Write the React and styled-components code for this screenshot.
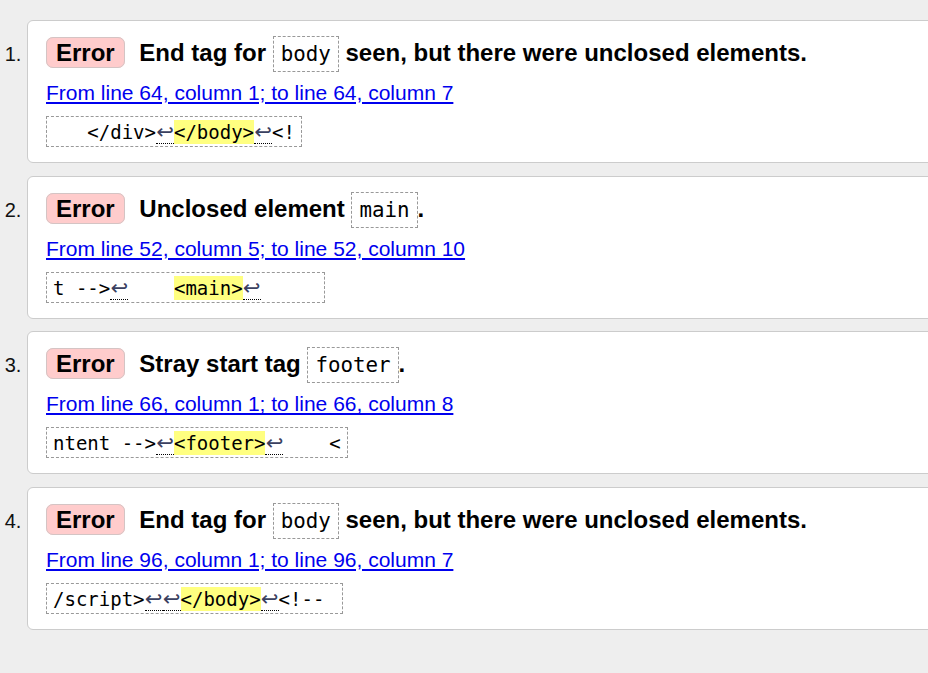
import React from "react";
import styled, { createGlobalStyle } from "styled-components";

const Global = createGlobalStyle`
  html, body { margin: 0; padding: 0; background: #eeeeee; overflow: hidden; }
  body { font-family: "Liberation Sans", Arial, sans-serif; color: #000; }
`;

const List = styled.ol`
  margin: 0;
  padding: 20px 0 0 27px;
  list-style: decimal outside;
`;

const Item = styled.li`
  font-size: 20px;
  background: #fff;
  border: 1px solid #cccccc;
  border-radius: 6px;
  margin: 0 -40px 12.67px 0;
  padding: 18px 18px 15px;
  &::marker { color: #111; font-size: 20px; }
`;

const Heading = styled.p`
  margin: 0;
  font-size: 24px;
  line-height: 28px;
  font-weight: bold;
  white-space: nowrap;
`;

const Badge = styled.strong`
  background: #ffcccc;
  border: 1px solid #d4c4c4;
  border-radius: 7px;
  padding: 1px 9px;
  margin-right: 8px;
`;

const Code = styled.code`
  font-family: "DejaVu Sans Mono", monospace;
  font-weight: normal;
  font-size: 20.8px;
  line-height: 1;
  border: 1px dashed #999;
  padding: 5px 7px;
`;

const Location = styled.p`
  margin: 14px 0 0;
  font-size: 21px;
  line-height: 24px;
  a { color: #0000ee; text-decoration: underline; }
`;

const Extract = styled.code`
  display: block;
  width: fit-content;
  margin-top: 11px;
  font-family: "DejaVu Sans Mono", monospace;
  font-size: 19px;
  line-height: 24px;
  white-space: pre;
  border: 1px dashed #999;
  padding: 3px 6px 2px;
`;

const Mark = styled.mark`
  display: inline-block;
  height: 24px;
  background: #ffff80;
  color: #000;
`;

const Newline = styled.span`
  display: inline-block;
  box-sizing: border-box;
  width: 18px;
  height: 24px;
  line-height: 24px;
  text-align: center;
  font-family: "DejaVu Sans", sans-serif;
  font-size: 21px;
  color: #3a4060;
  border-bottom: 1px dotted #000;
  vertical-align: top;
  overflow: hidden;
`;

const NL = { nl: true };
const hl = (t) => ({ hl: t });

const messages = [
  {
    pre: "End tag for ",
    code: "body",
    post: " seen, but there were unclosed elements.",
    loc: "From line 64, column 1; to line 64, column 7",
    extract: ["   </div>", NL, hl("</body>"), NL, "<!"],
  },
  {
    pre: "Unclosed element ",
    code: "main",
    post: ".",
    loc: "From line 52, column 5; to line 52, column 10",
    extract: ["t -->", NL, "    ", hl("<main>"), NL, "     "],
  },
  {
    pre: "Stray start tag ",
    code: "footer",
    post: ".",
    loc: "From line 66, column 1; to line 66, column 8",
    extract: ["ntent -->", NL, hl("<footer>"), NL, "    <"],
  },
  {
    pre: "End tag for ",
    code: "body",
    post: " seen, but there were unclosed elements.",
    loc: "From line 96, column 1; to line 96, column 7",
    extract: ["/script>", NL, NL, hl("</body>"), NL, "<!-- "],
  },
];

function renderPart(p, i) {
  if (typeof p === "string") return <React.Fragment key={i}>{p}</React.Fragment>;
  if (p.nl) return <Newline key={i}>↩</Newline>;
  return <Mark key={i}>{p.hl}</Mark>;
}

export default function App() {
  return (
    <>
      <Global />
      <List>
        {messages.map((m, i) => (
          <Item key={i}>
            <Heading>
              <Badge>Error</Badge> {m.pre}
              <Code>{m.code}</Code>
              {m.post}
            </Heading>
            <Location>
              <a href="#">{m.loc}</a>
            </Location>
            <Extract>{m.extract.map(renderPart)}</Extract>
          </Item>
        ))}
      </List>
    </>
  );
}
